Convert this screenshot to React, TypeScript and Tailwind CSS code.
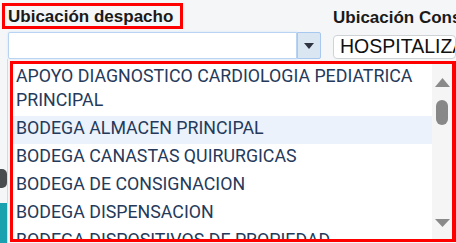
import React from "react";

const items: { label: string; active?: boolean }[] = [
  { label: "APOYO DIAGNOSTICO CARDIOLOGIA PEDIATRICA PRINCIPAL" },
  { label: "BODEGA ALMACEN PRINCIPAL", active: true },
  { label: "BODEGA CANASTAS QUIRURGICAS" },
  { label: "BODEGA DE CONSIGNACION" },
  { label: "BODEGA DISPENSACION" },
  { label: "BODEGA DISPOSITIVOS DE PROPIEDAD" },
];

export default function App() {
  return (
    <div className="relative w-[456px] h-[243px] overflow-hidden bg-[#f4f6f7] font-['Roboto',sans-serif]">
      <div className="flex">
        {/* left column */}
        <div className="flex flex-col w-[322px] shrink-0">
          <div className="ml-[2px] mt-[3px] w-[181px] h-[26px] border-[3px] border-[#ff0000] flex items-center pl-[3px]">
            <span className="font-['Liberation_Sans',Arial,sans-serif] font-bold text-[17px] leading-none text-[#1a1a1a] whitespace-nowrap">
              Ubicación despacho
            </span>
          </div>
          <div className="ml-[8px] mt-[3px] flex h-[27px] w-[313px]">
            <div className="flex-1 bg-white border border-[#b9d3f2] rounded-l-[2px] shadow-[0_0_2px_#cfe0f6]" />
            <div className="w-[24px] bg-[#dbe6f3] border border-[#a9c8ef] rounded-r-[2px] flex items-center justify-center">
              <svg width="10" height="6" viewBox="0 0 10 6">
                <path d="M0 0h10L5 6z" fill="#2e3440" />
              </svg>
            </div>
          </div>
          <div className="ml-[7px] w-[1px] h-[200px] bg-[#d6dadd]" />
        </div>
        {/* right column */}
        <div className="flex flex-col ml-[11px] flex-1 min-w-0">
          <div className="mt-[8px] font-['Liberation_Sans',Arial,sans-serif] font-bold text-[17px] leading-[19px] whitespace-nowrap text-[#1a1a1a]">
            Ubicación Consumo
          </div>
          <div className="mt-[8px] h-[24px] bg-white border border-[#cfd3d6] rounded-[4px] pl-[6px] flex items-center overflow-hidden whitespace-nowrap font-['Liberation_Sans',Arial,sans-serif] text-[19.5px] text-[#111]">
            HOSPITALIZACION
          </div>
        </div>
      </div>

      {/* background elements on left edge */}
      <div className="absolute left-0 top-[169px] w-[7px] h-[19px] bg-[#4a4d50] rounded-r-[5px]" />
      <div className="absolute left-0 top-[203px] w-[7px] h-[42px] bg-[#1aa1b0]" />

      {/* dropdown list overlay */}
      <div className="absolute left-[10px] top-[61px] w-[446px] h-[181px] border-[3px] border-r-[4px] border-[#ff0000] bg-white flex">
        <div className="flex-1 min-w-0 flex flex-col overflow-hidden text-[17.8px] leading-[24px] text-[#253a5a]">
          {items.map((it) => (
            <div
              key={it.label}
              className={`pl-[3px] pr-[2px] pt-0 pb-[4px] ${it.active ? "bg-[#ebf2fc]" : ""}`}
            >
              {it.label}
            </div>
          ))}
        </div>
        <div className="w-[20px] shrink-0 bg-[#f5f5f5] flex flex-col items-center">
          <svg className="mt-[14px]" width="15" height="9" viewBox="0 0 15 9">
            <path d="M7.5 0L15 9H0z" fill="#8a8a8a" />
          </svg>
          <div className="mt-[13px] w-[12px] h-[25px] rounded-full bg-[#888888]" />
          <div className="flex-1" />
          <svg className="mb-[12px]" width="15" height="8" viewBox="0 0 15 8">
            <path d="M0 0h15L7.5 8z" fill="#8a8a8a" />
          </svg>
        </div>
      </div>
    </div>
  );
}
